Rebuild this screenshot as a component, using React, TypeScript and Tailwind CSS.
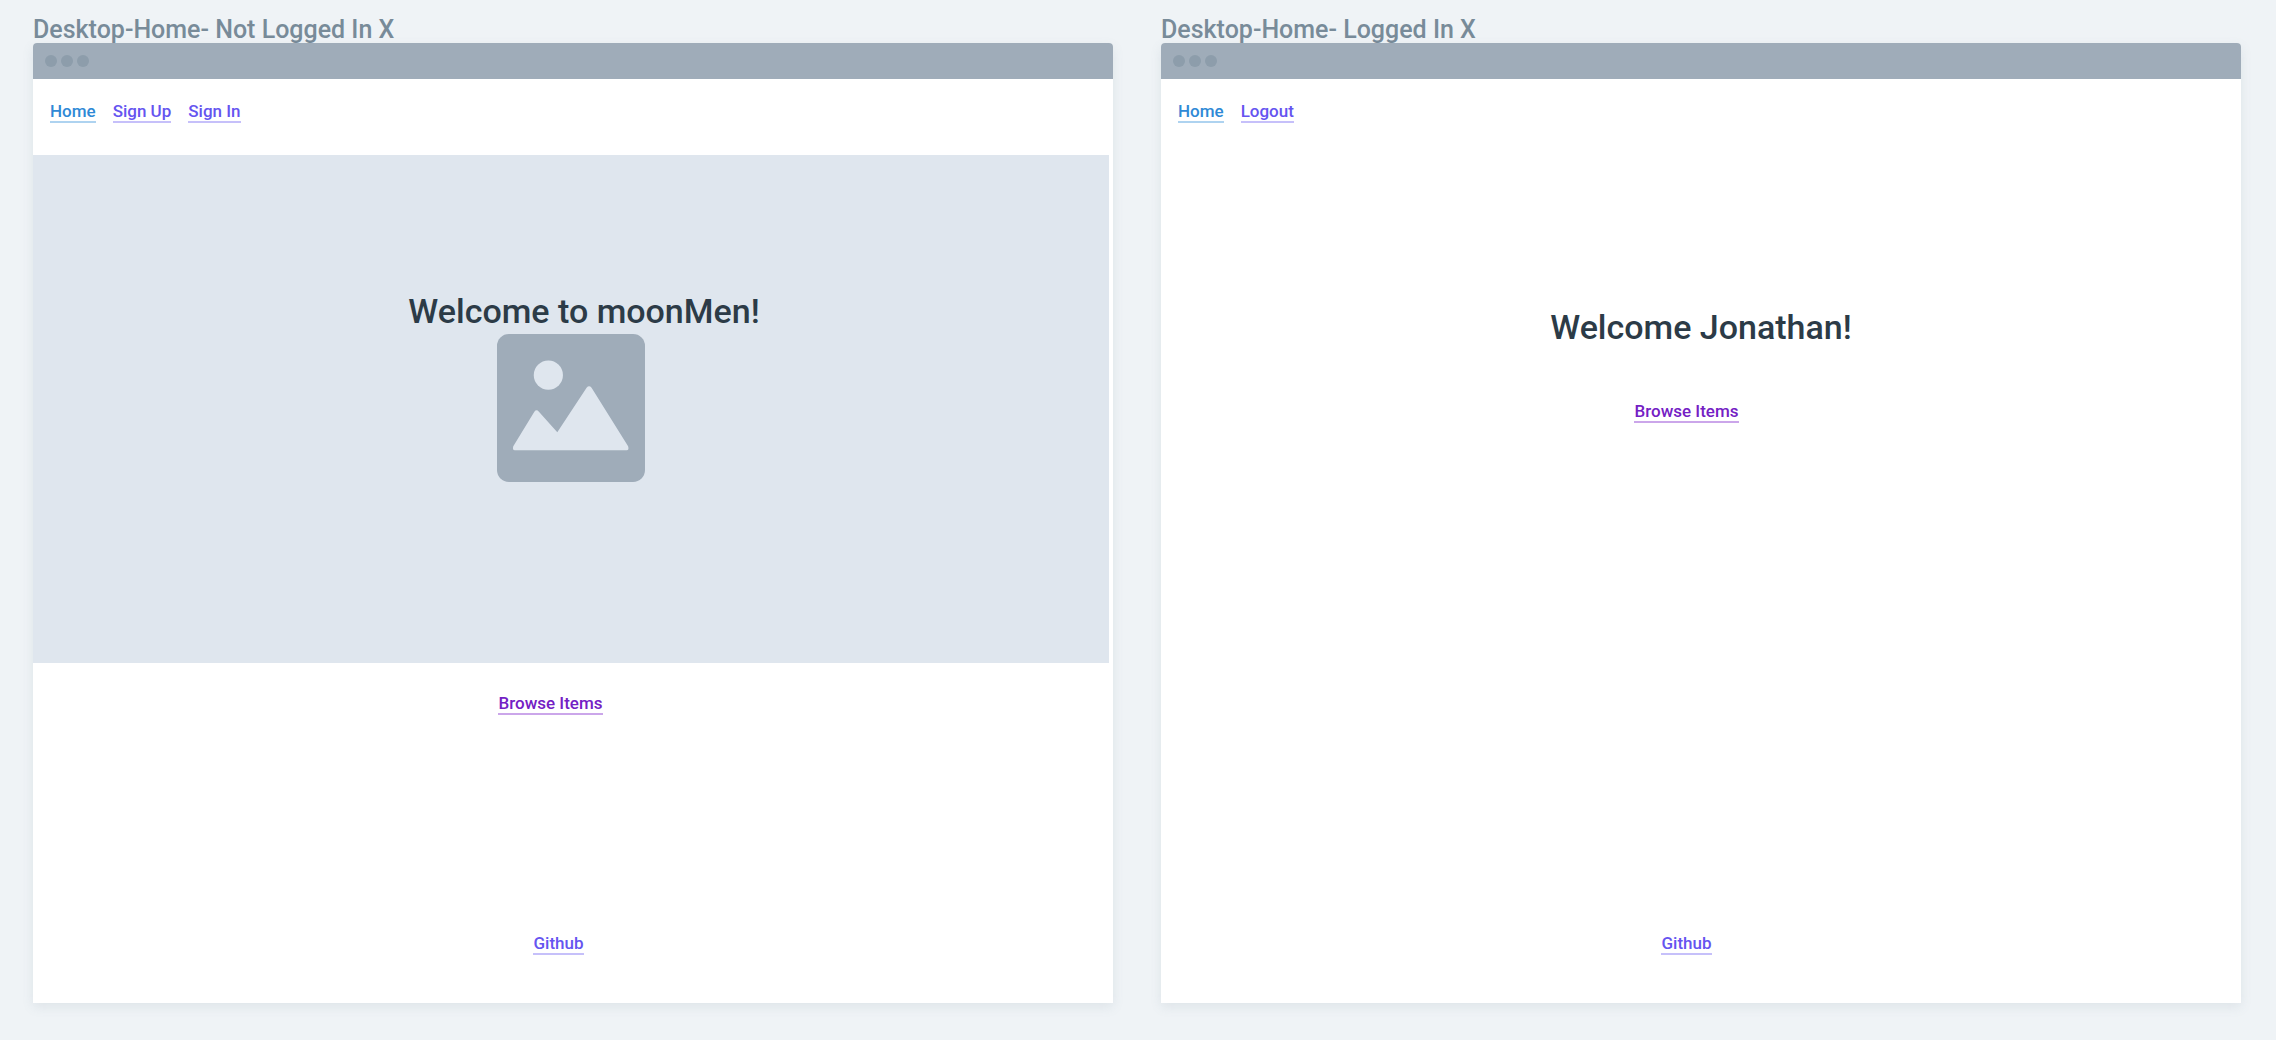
import type { ReactNode } from "react";

type Tone = "current" | "link" | "visited";

const tones: Record<Tone, string> = {
  current: "text-[#2f89d6] border-[#aed3f0]",
  link: "text-[#6554f0] border-[#c6c0fa]",
  visited: "text-[#7420c4] border-[#cba6ea]",
};

function TextLink({ tone, children }: { tone: Tone; children: ReactNode }) {
  return (
    <a
      href="#"
      className={`inline-block border-b-2 text-[17px] leading-5 font-medium whitespace-nowrap ${tones[tone]}`}
    >
      {children}
    </a>
  );
}

function Screen({ title, children }: { title: string; children: ReactNode }) {
  return (
    <section className="flex min-w-0 flex-col">
      <h2 className="text-[25px] leading-[26px] font-medium whitespace-nowrap text-[#788b99]">{title}</h2>
      <div className="flex grow flex-col rounded-t bg-white shadow-[0_4px_12px_rgba(100,120,140,0.12)]">
        <div className="flex h-9 items-center gap-1 rounded-t bg-[#9facb9] px-3">
          <span className="size-3 rounded-full bg-[#8d9dab]" />
          <span className="size-3 rounded-full bg-[#8d9dab]" />
          <span className="size-3 rounded-full bg-[#8d9dab]" />
        </div>
        {children}
        <footer className="mt-auto flex justify-center pr-[29px] pb-12">
          <TextLink tone="link">Github</TextLink>
        </footer>
      </div>
    </section>
  );
}

function Nav({ children }: { children: ReactNode }) {
  return <nav className="flex h-[76px] items-start gap-[17px] pt-[22px] pl-[17px]">{children}</nav>;
}

function Heading({ children }: { children: ReactNode }) {
  return <h1 className="text-[34px] leading-[42px] font-medium text-[#2c3b47]">{children}</h1>;
}

function PictureIcon() {
  return (
    <svg viewBox="0 0 149 149" className="size-[148px]" aria-hidden="true">
      <rect width="149" height="149" rx="12" fill="#9facb9" />
      <circle cx="51.7" cy="41.4" r="14.7" fill="#dfe6ee" />
      <path
        d="M37.6 78.2 Q39.7 75.5 42.2 78.2 L60.7 99 L90.2 54.2 Q92.7 51.2 95.2 54.2 L132 113 Q133.2 117 130.5 117 H18 Q15.200 117 16.400 113 Z"
        fill="#dfe6ee"
      />
    </svg>
  );
}

export default function App() {
  return (
    <main className="grid min-h-screen grid-cols-2 gap-12 bg-[#eff3f6] pt-[17px] pr-[35px] pb-[37px] pl-[33px] font-['Roboto',sans-serif]">
      <Screen title="Desktop-Home- Not Logged In X">
        <Nav>
          <TextLink tone="current">Home</TextLink>
          <TextLink tone="link">Sign Up</TextLink>
          <TextLink tone="link">Sign In</TextLink>
        </Nav>
        <div className="mr-1 flex h-[508px] flex-col items-center bg-[#dfe6ee] pt-[135px]">
          <div className="mb-[2px] pl-[26px]">
            <Heading>Welcome to moonMen!</Heading>
          </div>
          <PictureIcon />
        </div>
        <div className="flex justify-center pt-[30px] pr-[45px]">
          <TextLink tone="visited">Browse Items</TextLink>
        </div>
      </Screen>
      <Screen title="Desktop-Home- Logged In X">
        <Nav>
          <TextLink tone="current">Home</TextLink>
          <TextLink tone="link">Logout</TextLink>
        </Nav>
        <div className="flex flex-col items-center pt-[151px]">
          <Heading>Welcome Jonathan!</Heading>
          <div className="flex pt-[53px] pr-[29px]">
            <TextLink tone="visited">Browse Items</TextLink>
          </div>
        </div>
      </Screen>
    </main>
  );
}
